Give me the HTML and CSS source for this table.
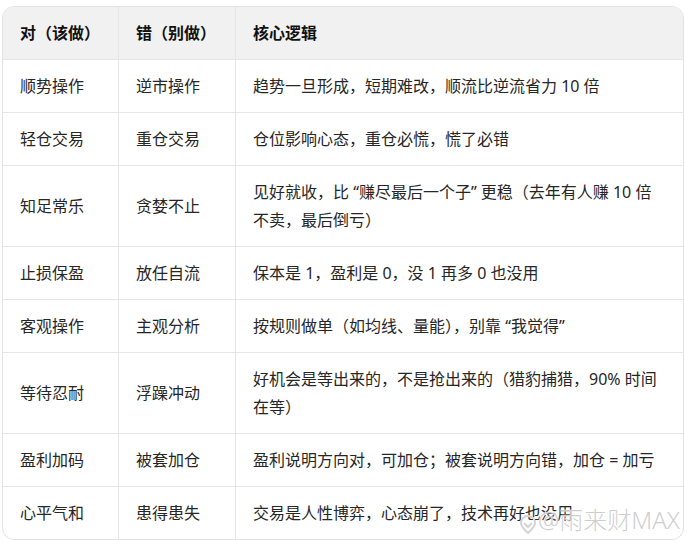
FILE: index.html
```html
<!DOCTYPE html>
<html lang="zh-CN">
<head>
<meta charset="utf-8">
<title>交易对错表</title>
<link rel="stylesheet" href="styles.css">
</head>
<body>
<div class="card">
  <table class="grid">
    <colgroup>
      <col class="c1"><col class="c2"><col class="c3">
    </colgroup>
    <thead>
      <tr><th>对（该做）</th><th>错（别做）</th><th>核心逻辑</th></tr>
    </thead>
    <tbody>
      <tr><td>顺势操作</td><td>逆市操作</td><td>趋势一旦形成，短期难改，顺流比逆流省力 10 倍</td></tr>
      <tr><td>轻仓交易</td><td>重仓交易</td><td>仓位影响心态，重仓必慌，慌了必错</td></tr>
      <tr><td>知足常乐</td><td>贪婪不止</td><td>见好就收，比 “赚尽最后一个子” 更稳（去年有人赚 10 倍不卖，最后倒亏）</td></tr>
      <tr><td>止损保盈</td><td>放任自流</td><td>保本是 1，盈利是 0，没 1 再多 0 也没用</td></tr>
      <tr><td>客观操作</td><td>主观分析</td><td>按规则做单（如均线、量能），别靠 “我觉得”</td></tr>
      <tr><td>等待忍耐</td><td>浮躁冲动</td><td>好机会是等出来的，不是抢出来的（猎豹捕猎，90% 时间在等）</td></tr>
      <tr><td>盈利加码</td><td>被套加仓</td><td>盈利说明方向对，可加仓；被套说明方向错，加仓 = 加亏</td></tr>
      <tr><td>心平气和</td><td>患得患失</td><td>交易是人性博弈，心态崩了，技术再好也没用</td></tr>
    </tbody>
  </table>
  <div class="mark">
    <svg class="mark-logo" width="18" height="20" viewBox="0 0 18 20" aria-hidden="true">
      <path d="M9 2 C13 2 16 5 16 9 C16 13 12 16 9 19 C6 16 2 13 2 9 C2 5 5 2 9 2 Z" fill="none" stroke="#d4d4d4" stroke-width="2"/>
      <path d="M5 9 L9 13 L13 9" fill="none" stroke="#d4d4d4" stroke-width="2"/>
    </svg>
    <span class="mark-text">@雨来财MAX</span>
  </div>
</div>
</body>
</html>
```

FILE: styles.css
```css
html, body {
  margin: 0;
  padding: 0;
  background: #ffffff;
}

body {
  padding: 6px 3px 0 2px;
  font-family: "Segoe UI", "Noto Sans", "Noto Sans CJK SC", sans-serif;
  font-size: 16px;
  color: #262626;
}

.card {
  position: relative;
  width: 680px;
  border: 1px solid #e3e3e3;
  border-radius: 12px;
  overflow: hidden;
}

.grid {
  width: 100%;
  border-collapse: separate;
  border-spacing: 0;
  table-layout: fixed;
}

.c1 { width: 116px; }
.c2 { width: 117px; }

.grid th,
.grid td {
  padding: 12px 16px 12px 17px;
  line-height: 28px;
  text-align: left;
  vertical-align: middle;
  border-right: 1px solid #e6e6e6;
  border-bottom: 1px solid #e6e6e6;
}

.grid th:last-child,
.grid td:last-child {
  border-right: none;
}

.grid tbody tr:last-child td {
  border-bottom: none;
}

.grid th {
  background: #f1f1f1;
  font-weight: 700;
  color: #111111;
}

.grid td {
  font-weight: 400;
}

.mark {
  position: absolute;
  left: 516px;
  top: 497px;
  display: flex;
  align-items: center;
  gap: 1px;
  pointer-events: none;
}

.mark-logo {
  margin-top: 8px;
}

.mark-text {
  font-family: "Noto Sans", "Noto Sans CJK SC", sans-serif;
  font-size: 24px;
  line-height: 32px;
  font-weight: 300;
  color: rgba(185, 185, 185, 0.7);
  text-shadow: 0 0 1px #ffffff, 0 0 2px #ffffff;
}
```
